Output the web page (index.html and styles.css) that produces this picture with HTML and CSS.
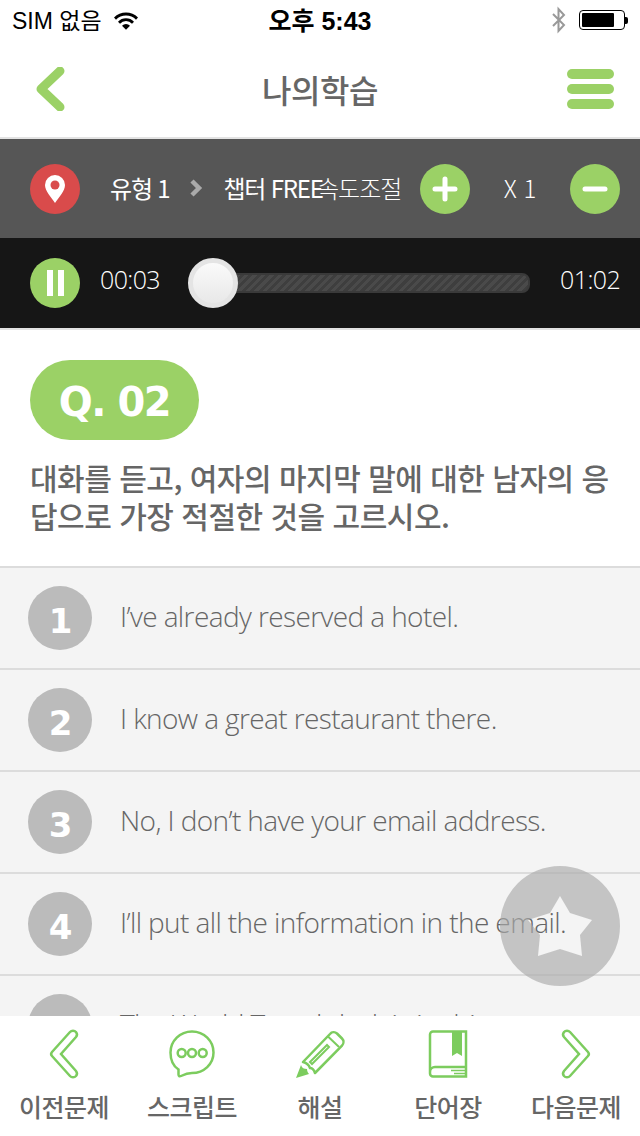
FILE: index.html
```html
<!DOCTYPE html>
<html lang="ko">
<head>
  <meta charset="UTF-8" />
  <title>나의학습</title>
  <link rel="stylesheet" href="styles.css">
</head>
<body>
  <div id="tela">
    <div class="status">
      <div class="status-esq">
        <span>SIM 없음</span>
        <svg width="26" height="20" viewBox="0 0 26 20"><path d="M1 7.500a17 17 0 0 1 24 0l-2 2.200a14 14 0 0 0-20 0z M5 11.700a11 11 0 0 1 16 0l-2 2.100a8 8 0 0 0-12 0z M9 15.800a5.500 5.500 0 0 1 8 0l-4 4z" fill="#000"/></svg>
      </div>
      <div class="status-hora">오후 5:43</div>
      <div class="status-dir">
        <svg width="18" height="28" viewBox="0 0 18 28"><path d="M3 8l11 11-5.500 6V3L14 9 3 20" fill="none" stroke="#999" stroke-width="2"/></svg>
        <div class="bateria"><div class="bateria-nivel"></div></div>
        <div class="bateria-ponta"></div>
      </div>
    </div>

    <div class="topo">
      <svg width="30" height="44" viewBox="0 0 30 44"><path d="M25 4L6 22l19 18" fill="none" stroke="#9bd166" stroke-width="9" stroke-linecap="round" stroke-linejoin="round"/></svg>
      <h1>나의학습</h1>
      <div class="menu"><i></i><i></i><i></i></div>
    </div>

    <div class="barra">
      <div class="circulo vermelho">
        <svg width="22" height="30" viewBox="0 0 22 30"><path d="M11 1a10 10 0 0 1 10 10c0 6-6 12-10 18C7 23 1 17 1 11A10 10 0 0 1 11 1z" fill="#fff"/><circle cx="11" cy="11" r="4.500" fill="#d94b4b"/></svg>
      </div>
      <div class="trilha">
        <span>유형 1</span>
        <svg width="14" height="18" viewBox="0 0 14 18"><path d="M3 2l7 7-7 7" fill="none" stroke="#aaa" stroke-width="4.500"/></svg>
        <span class="capitulo">챕터 FREE</span>
      </div>
      <span class="velocidade">속도조절</span>
      <div class="circulo verde"><svg width="28" height="28" viewBox="0 0 28 28"><path d="M14 4v20M4 14h20" stroke="#fff" stroke-width="5" stroke-linecap="round"/></svg></div>
      <span class="vezes">X 1</span>
      <div class="circulo verde"><svg width="28" height="28" viewBox="0 0 28 28"><path d="M4 14h20" stroke="#fff" stroke-width="5" stroke-linecap="round"/></svg></div>
    </div>

    <div class="player">
      <div class="circulo verde pausa"><i></i><i></i></div>
      <span class="tempo">00:03</span>
      <div class="progresso"><div class="pino"></div></div>
      <span class="tempo">01:02</span>
    </div>

    <div class="questao">
      <div class="q-num">Q. 02</div>
      <p>대화를 듣고, 여자의 마지막 말에 대한 남자의 응답으로 가장 적절한 것을 고르시오.</p>
    </div>

    <div class="lista">
      <div class="item"><div class="num">1</div><span>I’ve already reserved a hotel.</span></div>
      <div class="item"><div class="num">2</div><span>I know a great restaurant there.</span></div>
      <div class="item"><div class="num">3</div><span>No, I don’t have your email address.</span></div>
      <div class="item"><div class="num">4</div><span>I’ll put all the information in the email.</span></div>
      <div class="item"><div class="num">5</div><span>The World Travel desk is in this town.</span></div>
    </div>

    <!-- a estrela e um furo no circulo, o texto aparece por baixo -->
    <svg class="estrela" width="120" height="120" viewBox="0 0 120 120"><path fill-rule="evenodd" d="M60 0a60 60 0 1 1 0 120A60 60 0 0 1 60 0z M60 30L70 47 92 54 80 69 82 90 60 83 38 90 40 69 28 54 50 47z" fill="#aaa" fill-opacity=".65"/></svg>

    <div class="rodape">
      <div class="aba">
        <svg width="50" height="50" viewBox="0 0 50 50"><path d="M31 3L13 23a3 3 0 0 0 0 4l18 20a4 4 0 0 0 6 0 4 4 0 0 0 0-5L22 25 37 8a4 4 0 0 0 0-5 4 4 0 0 0-6 0z" fill="none" stroke="#7ccc5e" stroke-width="2.500"/></svg>
        <span>이전문제</span>
      </div>
      <div class="aba">
        <svg width="50" height="50" viewBox="0 0 50 50"><path d="M25 2.500c12 0 21.500 9.500 21.500 21S37 44 25 44c-3 0-7 1-11 3-1.500 .8-2.500 0-2.500-1.500v-5C6 37 3.500 30 3.500 23.500 3.500 12 13 2.500 25 2.500z" fill="none" stroke="#7ccc5e" stroke-width="2.500"/><circle cx="14.700" cy="24" r="4" fill="none" stroke="#7ccc5e" stroke-width="2.500"/><circle cx="25" cy="24" r="4" fill="none" stroke="#7ccc5e" stroke-width="2.500"/><circle cx="35.700" cy="24" r="4" fill="none" stroke="#7ccc5e" stroke-width="2.500"/></svg>
        <span>스크립트</span>
      </div>
      <div class="aba">
        <svg width="50" height="50" viewBox="0 0 50 50"><path d="M8 33L35 5a5 5 0 0 1 7-.5l5 5a5 5 0 0 1 0 7L20 44c-1-3-3-5-5-5-1-3-3-5-7-6z" fill="none" stroke="#7ccc5e" stroke-width="2.500" stroke-linejoin="round"/><path d="M15 33L32 16l2 2L17 35z M33 7.500L44 18" fill="none" stroke="#7ccc5e" stroke-width="2"/><path d="M1 49L6 36c1 3 3 4 6 4 0 2 1 4 2 5z" fill="#7ccc5e"/></svg>
        <span>해설</span>
      </div>
      <div class="aba">
        <svg width="50" height="50" viewBox="0 0 50 50"><path d="M43 2.500H10a3 3 0 0 0-3 3v39a3 3 0 0 0 3 3h33zM7 43a5 5 0 0 1 5-5h31" fill="none" stroke="#7ccc5e" stroke-width="2.500"/><path d="M29 2.500h10V27l-5-3-5 3z" fill="#7ccc5e"/><path d="M28 41.500h15M31 44.500h12" stroke="#7ccc5e" stroke-width="1.500"/></svg>
        <span>단어장</span>
      </div>
      <div class="aba">
        <svg width="50" height="50" viewBox="0 0 50 50"><path d="M19 3l18 20a3 3 0 0 1 0 4L19 47a4 4 0 0 1-6 0 4 4 0 0 1 0-5l15-17L13 8a4 4 0 0 1 0-5 4 4 0 0 1 6 0z" fill="none" stroke="#7ccc5e" stroke-width="2.500"/></svg>
        <span>다음문제</span>
      </div>
    </div>
  </div>
</body>
</html>
```

FILE: styles.css
```css
* {
  box-sizing: border-box;
}

body {
  margin: 0;
  background: #fff;
  font-family: "Noto Sans CJK KR", sans-serif;
  color: #666;
}

#tela {
  position: relative;
  display: flex;
  flex-direction: column;
  width: 640px;
  height: 1136px;
  overflow: hidden;
}

.status {
  display: flex;
  align-items: center;
  justify-content: space-between;
  height: 40px;
  padding: 0 12px;
  color: #000;
  font-family: "Liberation Sans", "Noto Sans CJK KR", sans-serif;
  font-size: 23px;
  flex: none;
}

.status-esq {
  display: flex;
  align-items: center;
  gap: 11px;
  width: 220px;
}

.status-esq span {
  padding-bottom: 2px;
}

.status-hora {
  font-weight: bold;
  font-size: 25px;
  padding-bottom: 2px;
}

.status-dir {
  display: flex;
  align-items: center;
  justify-content: flex-end;
  width: 220px;
}

.status-dir svg {
  margin-right: 11px;
}

.bateria {
  width: 46px;
  height: 20px;
  padding: 2px;
  border: 1px solid #000;
  border-radius: 4px;
}

.bateria-nivel {
  width: 32px;
  height: 100%;
  background: #000;
  border-radius: 1px;
}

.bateria-ponta {
  width: 3px;
  height: 7px;
  background: #000;
  border-radius: 0 2px 2px 0;
}

.topo {
  display: flex;
  align-items: center;
  justify-content: space-between;
  height: 97px;
  padding: 0 26px 0 35px;
  flex: none;
}

.topo h1 {
  margin: 0 0 0 8px;
  font-size: 32px;
  font-weight: 500;
  letter-spacing: -.5px;
  color: #666;
}

.menu {
  display: flex;
  flex-direction: column;
  gap: 5px;
}

.menu i {
  display: block;
  width: 47px;
  height: 10px;
  border-radius: 5px;
  background: #9bd166;
}

.barra {
  display: flex;
  align-items: center;
  height: 101px;
  padding: 0 20px 0 30px;
  background: #565656;
  border-top: 2px solid #e3e3e3;
  color: #fff;
  flex: none;
}

.circulo {
  display: flex;
  align-items: center;
  justify-content: center;
  width: 50px;
  height: 50px;
  border-radius: 50%;
  flex: none;
}

.vermelho {
  background: #d94b4b;
}

.verde {
  background: #9bd166;
}

.trilha {
  display: flex;
  align-items: center;
  gap: 20px;
  width: 207px;
  margin-left: 30px;
  font-size: 24px;
  font-weight: 400;
  letter-spacing: -1.2px;
  white-space: nowrap;
  padding-bottom: 2px;
}

.trilha svg,
.trilha span {
  flex: none;
}

.velocidade {
  width: 83px;
  font-size: 24px;
  font-weight: 300;
  letter-spacing: -1px;
  white-space: nowrap;
  margin-right: 20px;
  padding-bottom: 2px;
}

.vezes {
  width: 100px;
  text-align: center;
  font-size: 24px;
  font-weight: 300;
  padding-bottom: 2px;
}

.player {
  display: flex;
  align-items: center;
  height: 90px;
  padding: 0 20px 0 30px;
  background: #161616;
  color: #fff;
  flex: none;
}

.pausa {
  gap: 5px;
}

.pausa i {
  display: block;
  width: 6px;
  height: 26px;
  background: #fff;
}

.tempo {
  font-family: "Open Sans", sans-serif;
  font-size: 25px;
  font-weight: 300;
  letter-spacing: -.6px;
  padding-bottom: 8px;
}

.player .pausa + .tempo {
  margin-left: 20px;
}

.progresso {
  position: relative;
  width: 330px;
  height: 20px;
  margin: 0 30px 0 40px;
  border-radius: 8px;
  border: 2px solid #3a3a3a;
  background: repeating-linear-gradient(135deg, #4a4a4a 0 3px, #3e3e3e 3px 6px);
  flex: none;
}

.pino {
  position: absolute;
  left: -14px;
  top: -17px;
  width: 50px;
  height: 50px;
  border-radius: 50%;
  border: 5px solid #e4e4e4;
  background: linear-gradient(#fafafa, #e8e8e8);
}

.questao {
  padding: 30px 30px 0;
  height: 238px;
  border-top: 2px solid #e3e3e3;
  flex: none;
}

.q-num {
  width: 169px;
  height: 80px;
  border-radius: 40px;
  background: #9bd166;
  color: #fff;
  font-family: "DejaVu Sans", sans-serif;
  font-weight: bold;
  font-size: 40px;
  line-height: 84px;
  letter-spacing: -1.5px;
  text-align: center;
}

.questao p {
  margin: 18px 0 0;
  font-size: 30px;
  line-height: 38px;
  font-weight: 500;
  letter-spacing: -.5px;
  color: #666;
}

.lista {
  flex: 1;
  overflow: hidden;
  background: #f4f4f4;
}

.item {
  display: flex;
  align-items: center;
  gap: 28px;
  height: 102px;
  padding: 0 28px;
  border-top: 2px solid #dcdcdc;
  font-family: "Open Sans", sans-serif;
  font-size: 28px;
  font-weight: 300;
  letter-spacing: -.6px;
  color: #666;
}

.item span {
  padding-bottom: 5px;
}

.num {
  width: 64px;
  height: 64px;
  padding-left: 1px;
  border-radius: 50%;
  background: #bbb;
  color: #fff;
  font-family: "DejaVu Sans", sans-serif;
  font-weight: bold;
  font-size: 34px;
  line-height: 70px;
  letter-spacing: 0;
  text-align: center;
  flex: none;
}

.estrela {
  position: absolute;
  left: 500px;
  top: 866px;
}

.rodape {
  position: relative;
  display: flex;
  height: 120px;
  background: #fff;
  flex: none;
}

.aba {
  display: flex;
  flex-direction: column;
  align-items: center;
  width: 128px;
  padding-top: 13px;
  font-size: 25px;
  font-weight: 500;
  letter-spacing: -.5px;
  color: #666;
}

.aba span {
  margin-top: 9px;
}
```
